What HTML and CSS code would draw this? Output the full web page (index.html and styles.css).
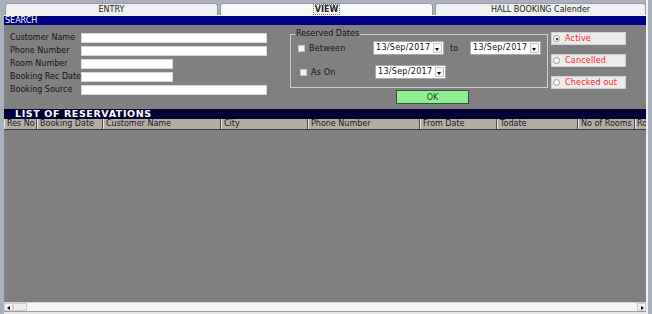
FILE: index.html
```html
<!DOCTYPE html>
<html lang="en">
<head>
    <meta charset="UTF-8">
    <meta name="viewport" content="width=device-width, initial-scale=1.0">
    <title>Reservations - View</title>
    <link rel="stylesheet" href="styles.css">
</head>
<body>
    <div id="window">
        <div id="tabs">
            <div class="tab tab-entry">ENTRY</div>
            <div class="tab tab-view active"><span class="focus">VIEW</span></div>
            <div class="tab tab-hall">HALL BOOKING Calender</div>
        </div>

        <div class="bar search-bar">SEARCH</div>

        <div id="search">
            <!-- text filters -->
            <div class="fields">
                <div class="row"><label>Customer Name</label><span class="input long"></span></div>
                <div class="row"><label>Phone Number</label><span class="input long"></span></div>
                <div class="row"><label>Room Number</label><span class="input short"></span></div>
                <div class="row"><label>Booking Rec Date</label><span class="input short"></span></div>
                <div class="row"><label>Booking Source</label><span class="input long"></span></div>
            </div>

            <div class="middle">
                <fieldset class="dates">
                    <legend>Reserved Dates</legend>
                    <div class="date-row first">
                        <span class="check-label"><span class="check"></span>Between</span>
                        <span class="select"><span class="value">13/Sep/2017</span><span class="arrow"></span></span>
                        <span class="to">to</span>
                        <span class="select"><span class="value">13/Sep/2017</span><span class="arrow"></span></span>
                    </div>
                    <div class="date-row second">
                        <span class="check-label"><span class="check"></span>As On</span>
                        <span class="select"><span class="value">13/Sep/2017</span><span class="arrow"></span></span>
                    </div>
                </fieldset>
                <button class="ok">OK</button>
            </div>

            <div class="status">
                <div class="opt"><span class="radio checked"></span>Active</div>
                <div class="opt"><span class="radio"></span>Cancelled</div>
                <div class="opt"><span class="radio"></span>Checked out</div>
            </div>
        </div>

        <div class="bar list-bar">LIST OF RESERVATIONS</div>

        <div id="grid-head">
            <span class="col" style="width: 33px">Res No</span>
            <span class="col" style="width: 66px">Booking Date</span>
            <span class="col" style="width: 118px">Customer Name</span>
            <span class="col" style="width: 87px">City</span>
            <span class="col" style="width: 112px">Phone Number</span>
            <span class="col" style="width: 77px">From Date</span>
            <span class="col" style="width: 81px">Todate</span>
            <span class="col" style="width: 57px">No of Rooms</span>
            <span class="col last">Ro</span>
        </div>
        <div id="grid-body"></div>

        <div id="hscroll">
            <span class="sbtn left"></span>
            <span class="thumb"></span>
            <span class="track"></span>
            <span class="sbtn right"></span>
        </div>
        <div id="foot"></div>
    </div>
</body>
</html>
```

FILE: styles.css
```css
* {margin: 0; padding: 0; box-sizing: border-box;}

body {
    background-color: #a9b1bf;
    font-family: "DejaVu Sans", Verdana, sans-serif;
    font-size: 8px;
    color: #151515;
    overflow: hidden;
}

#window {
    margin-left: 4px;
    width: 644px;
    height: 314px;
    border-right: 2px solid #eef0f2;
    background-color: #808080;
    overflow: hidden;
}

/* tab strip */
#tabs {
    display: flex;
    gap: 2px;
    height: 16px;
    padding: 3px 0 0 1px;
    background-color: #a9b1bf;
    border-bottom: 1px solid #f4f4f4;
}
.tab {
    height: 12px;
    line-height: 11px;
    text-align: center;
    background-color: #efefef;
    border: 1px solid #9a9a9a;
    border-bottom: none;
    border-radius: 3px 3px 0 0;
    color: #222;
    white-space: nowrap;
}
.tab-entry { width: 214px; }
.tab-view { width: 214px; background-color: #f8f8f8; }
.tab-hall { width: 212px; }
.tab .focus {
    font-weight: bold;
    border: 1px dotted #777;
    padding: 0 1px;
}

.bar {
    color: #fff;
    white-space: nowrap;
}
.search-bar {
    height: 9px;
    line-height: 9px;
    padding-left: 1px;
    background-color: #000080;
}
.list-bar {
    height: 10px;
    line-height: 10px;
    padding-left: 11px;
    background-color: #000035;
    font-weight: bold;
    font-size: 9.5px;
    letter-spacing: 0.6px;
}

/* search panel */
#search {
    display: flex;
    align-items: flex-start;
    height: 84px;
    padding: 4px 0 0 6px;
}
.fields {
    display: flex;
    flex-direction: column;
    gap: 3px;
    margin-top: 4px;
}
.row {
    display: flex;
    height: 10px;
}
.row label {
    width: 71px;
    line-height: 10px;
    white-space: nowrap;
    overflow: hidden;
}
.input {
    height: 10px;
    background-color: #fff;
    border: 1px solid #d8d8d8;
}
.input.long { width: 186px; }
.input.short { width: 92px; }

.middle {
    margin-left: 23px;
}
.dates {
    width: 258px;
    height: 59px;
    border: 1px solid #cfcfcf;
    padding: 0 0 0 4px;
    min-width: 0;
}
.dates legend {
    padding: 0 1px;
    line-height: 10px;
}
.date-row {
    display: flex;
    align-items: center;
    height: 14px;
    margin-left: 3px;
}
.date-row.first { margin-top: 2px; }
.date-row.second { margin-top: 10px; margin-left: 5px; }
.check-label {
    display: flex;
    align-items: center;
    width: 75px;
    letter-spacing: 0.2px;
}
.check {
    width: 7px;
    height: 7px;
    margin-right: 4px;
    background-color: #f2f2f2;
    border: 1px solid #c4c4c4;
}
.select {
    display: flex;
    width: 71px;
    height: 14px;
    background-color: #fff;
    border: 1px solid #a8a8a8;
}
.select .value {
    flex: 1;
    line-height: 12px;
    padding-left: 2px;
    letter-spacing: 0.3px;
    color: #111;
    white-space: nowrap;
}
.select .arrow {
    position: relative;
    width: 9px;
    margin: 1px;
    border: 1px solid #c8c8c8;
    background-color: #f4f4f4;
}
.select .arrow::after {
    content: '';
    position: absolute;
    left: 1px;
    top: 4px;
    border-left: 2.5px solid transparent;
    border-right: 2.5px solid transparent;
    border-top: 3px solid #000;
}
.to {
    width: 20px;
    margin-left: 6px;
}
.ok {
    display: block;
    width: 73px;
    height: 14px;
    margin: 2px 0 0 106px;
    background-color: #93ee8f;
    border: 1px solid #2f5450;
    font-family: "DejaVu Sans", Verdana, sans-serif;
    font-size: 8px;
    color: #333;
}

.status {
    display: flex;
    flex-direction: column;
    gap: 9px;
    margin: 3px 0 0 3px;
}
.opt {
    display: flex;
    align-items: center;
    width: 75px;
    height: 13px;
    background-color: #ebebeb;
    border: 1px solid #d2d2d2;
    color: #ff1a1a;
    letter-spacing: 0.2px;
}
.radio {
    position: relative;
    width: 7px;
    height: 7px;
    margin: 0 5px 0 1px;
    border-radius: 50%;
    background-color: #f8f8f8;
    border: 1px solid #9a9a9a;
}
.radio.checked::after {
    content: '';
    position: absolute;
    left: 1.5px;
    top: 1.5px;
    width: 2px;
    height: 2px;
    border-radius: 50%;
    background-color: #000;
}

/* reservations grid */
#grid-head {
    display: flex;
    height: 11px;
    background-color: #b5ada5;
    border-bottom: 1px solid #3a3a3a;
    overflow: hidden;
}
.col {
    flex: none;
    height: 10px;
    line-height: 10px;
    padding-left: 2px;
    border-left: 1px solid #ece8e4;
    border-right: 1px solid #4a4a4a;
    white-space: nowrap;
    overflow: hidden;
    color: #1a1a1a;
}
.col.last {
    padding-left: 1px;
    border-right: none;
}
#grid-body {
    height: 172px;
    background-color: #808080;
}

#hscroll {
    display: flex;
    height: 9px;
    background-color: #f7f7f7;
    border-top: 1px solid #d4d4d4;
}
.sbtn {
    position: relative;
    width: 9px;
    border: 1px solid #d0d0d0;
    background-color: #f1f1f1;
}
.sbtn::after {
    content: '';
    position: absolute;
    top: 1.5px;
    border-top: 2.5px solid transparent;
    border-bottom: 2.5px solid transparent;
}
.sbtn.left::after { left: 2px; border-right: 3px solid #000; }
.sbtn.right::after { left: 3px; border-left: 3px solid #000; }
.thumb {
    width: 14px;
    border: 1px solid #cfcfcf;
    background-color: #eeeeee;
}
.track { flex: 1; }

#foot {
    height: 4px;
    background-color: #e6e6e6;
    border-top: 1px solid #9c9c9c;
}
```
